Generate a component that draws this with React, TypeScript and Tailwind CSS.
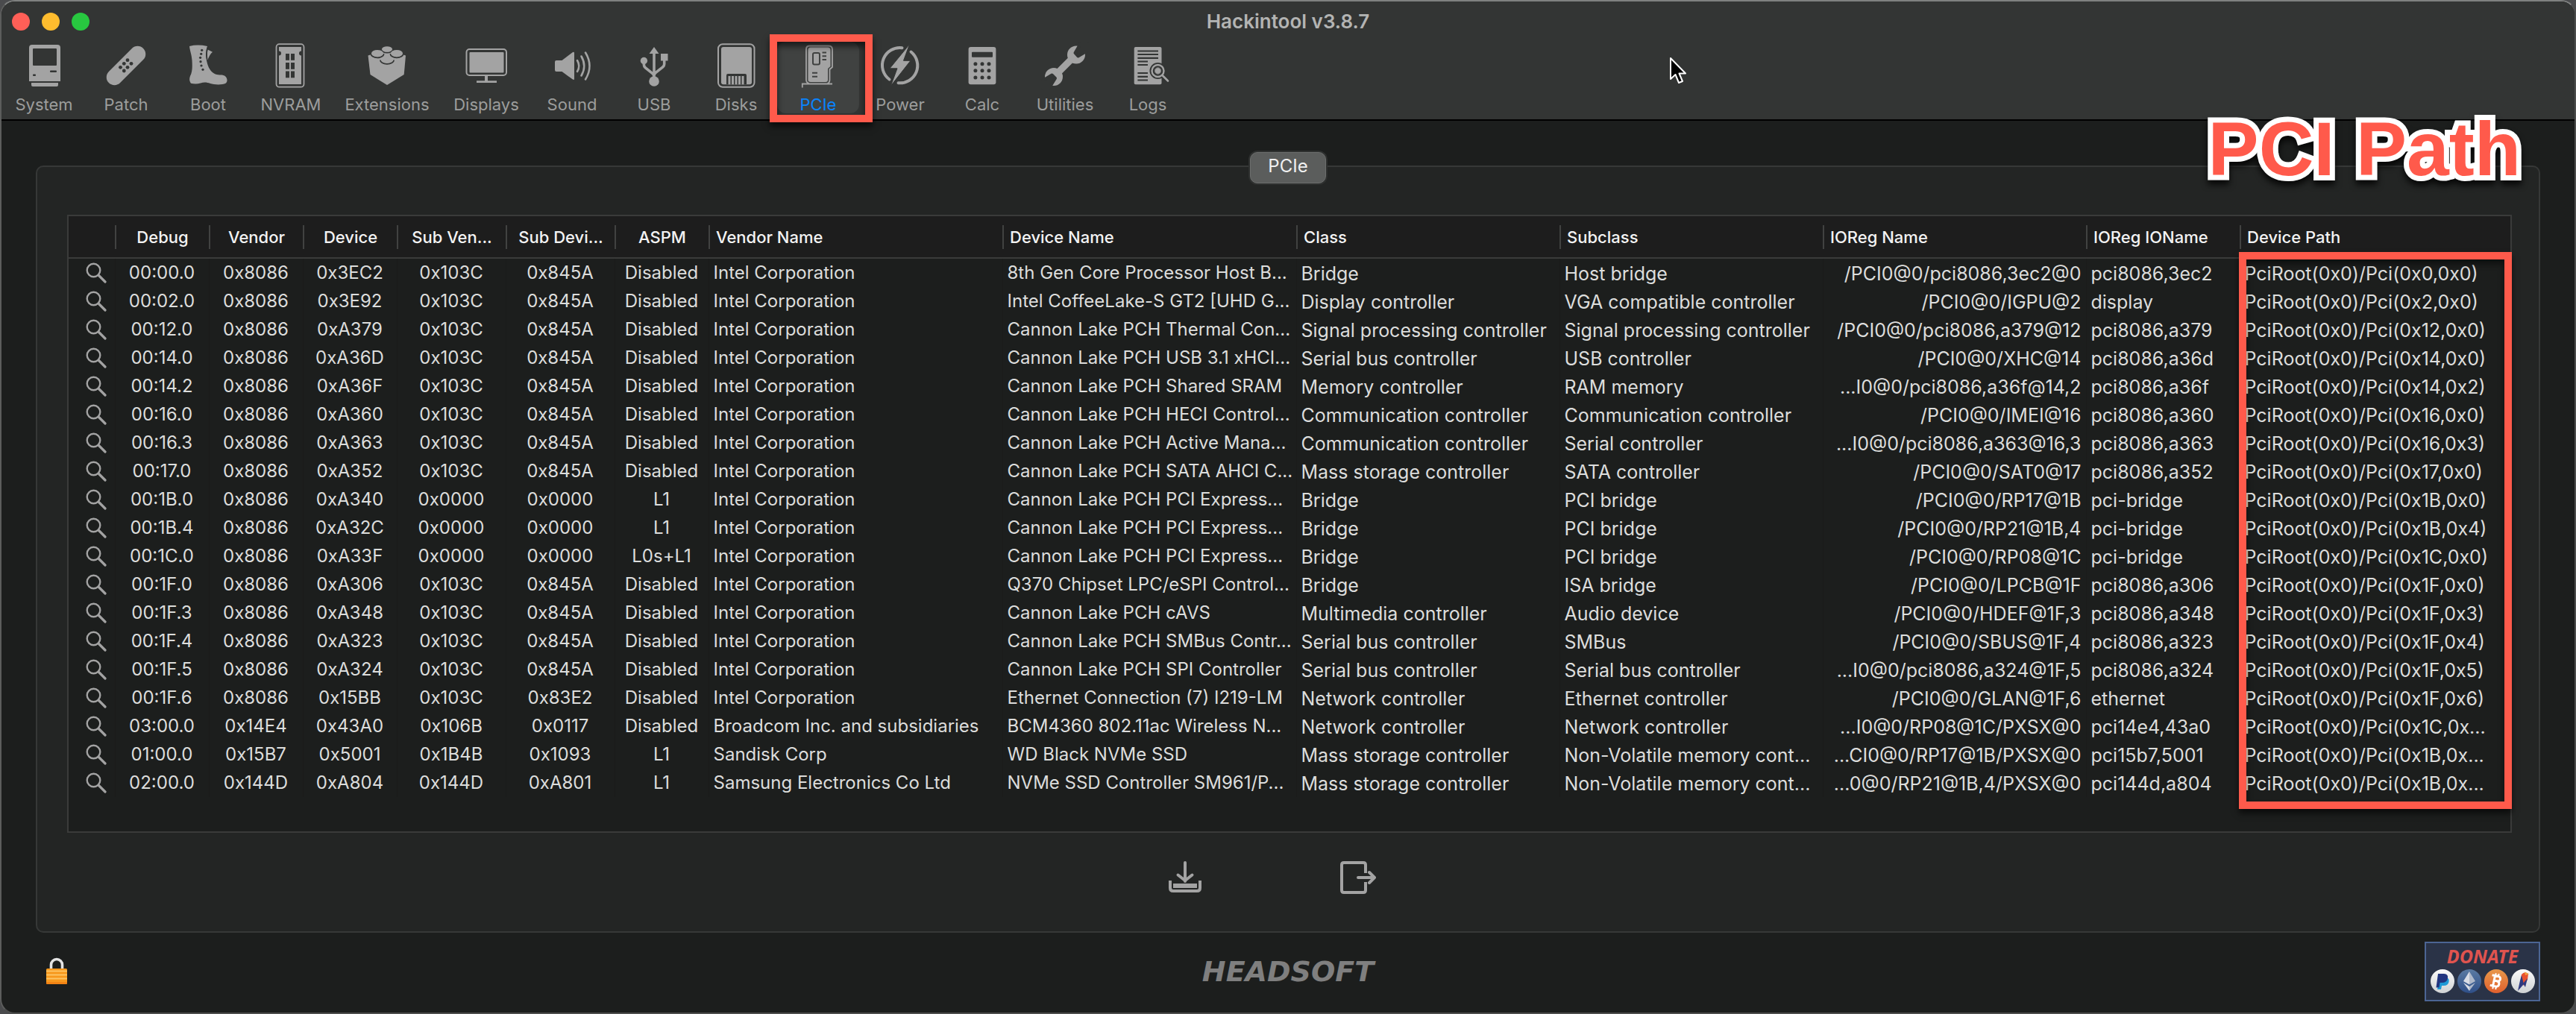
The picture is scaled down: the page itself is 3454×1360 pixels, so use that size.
import type { ReactNode } from "react";

const G = "#a3a3a3";
const BG = "#333534";

const toolIcons: Record<string, ReactNode> = {
  System: (
    <>
      <path d="M12 53V8a4 4 0 0 1 4-4h34a4 4 0 0 1 4 4v45z" fill={G} />
      <rect x="17" y="9" width="32" height="23" rx="1" fill={BG} />
      <rect x="40" y="38.5" width="9" height="2.5" rx="1" fill={BG} />
      <rect x="17" y="43.5" width="4" height="2.5" rx="1" fill={BG} />
      <path d="M15 55h36v3a2 2 0 0 1-2 2H17a2 2 0 0 1-2-2z" fill={G} />
    </>
  ),
  Patch: (
    <>
      <path d="M16.500 47.500L47.500 16.500" stroke={G} strokeWidth="21.500" strokeLinecap="round" />
      {[[34, 24.7], [29.3, 29.3], [39, 29.3], [24.5, 34.3], [34, 34.3], [29.3, 39]].map(([x, y]) => (
        <circle key={`${x}-${y}`} cx={x} cy={y} r="2.400" fill={BG} />
      ))}
    </>
  ),
  Boot: (
    <>
      <path d="M7 6Q18 3.200 31 6Q28 14 29.500 22C31 32 34 39 40 42.500C45 45.500 50 43.500 54 45.500C58 48 58.500 53 56 55.500C50 58.500 40 57.500 35 56C30 54 26 54 22 55.500C17 56.800 13 56.500 9 55.700C7 53 6.500 50 8 46C11 40 11 34 10.500 25C10 17 7.500 12 7 6z" fill={G} />
      <path d="M31.500 10.500L38 13.700C35 16 33 20 31 25.500C30 20 30.500 15 31.500 10.500z" fill={G} />
      <path d="M32 6C29 13 30 20 31 26" stroke={BG} strokeWidth="1.500" fill="none" />
      {[[23.7, 11.3], [22.7, 16.3], [21.6, 21.3], [22, 26.7], [23, 32], [25, 37.3]].map(([x, y]) => (
        <circle key={y} cx={x} cy={y} r="1.600" fill={BG} />
      ))}
    </>
  ),
  NVRAM: (
    <>
      <rect x="12.500" y="3.200" width="37" height="57.500" rx="4" stroke={G} strokeWidth="1.800" fill="none" />
      <path d="M16 7h30v5.500a3 3 0 0 0 0 6V57H16V18.500a3 3 0 0 0 0-6z" fill={G} />
      {[16, 28, 39.5].map((y) => (
        <g key={y} fill={BG}>
          <rect x="25" y={y} width="5" height="8.800" />
          <rect x="32" y={y} width="5" height="8.800" />
        </g>
      ))}
    </>
  ),
  Extensions: (
    <>
      <path d="M6.500 18.500L32 10l25 8.500L54.700 44L32 58L9.500 44z" fill={G} />
      {[[32, 9.8, 7, 3.6], [19, 15.5, 8, 4.6], [45, 15.5, 8, 4.6], [32, 24, 8.500, 4.600]].map(([x, y, rx, ry]) => (
        <g key={`${x}-${y}`}>
          <path d={`M${x - rx - 0.6} ${y + 0.5}A${rx + 0.6} ${ry + 0.8} 0 0 0 ${x + rx + 0.6} ${y + 0.5}`} fill={G} stroke={BG} strokeWidth="1.800" />
          <ellipse cx={x} cy={y} rx={rx} ry={ry} fill={G} />
        </g>
      ))}
    </>
  ),
  Displays: (
    <>
      <rect x="5.500" y="10" width="53.500" height="35" rx="4" stroke={G} strokeWidth="2" fill="none" />
      <rect x="9.500" y="14" width="46" height="27.500" rx="1" fill={G} />
      <path d="M30 46h4v6.300h12V55H19v-2.700h11z" fill={G} />
    </>
  ),
  Sound: (
    <>
      <path d="M9 27a2 2 0 0 1 2-2h7.500L33 14q2-.8 2 1v35q0 1.500-2 .6L18.500 40H11a2 2 0 0 1-2-2z" fill={G} />
      <path d="M39 25q4.500 7.500 0 15M44.500 19.500q7.500 13 0 26M50 14.500q11 18 0 36" stroke={G} strokeWidth="2.600" strokeLinecap="round" fill="none" />
    </>
  ),
  USB: (
    <>
      <path d="M32 7l6.500 9h-13z" fill={G} />
      <path d="M32 14V50M18.400 28v3q0 2 2 4L30 42.500q2 2 2 4M45.700 24v6q0 2-2 4L34 41.500q-2 2-2 4" stroke={G} strokeWidth="3.600" fill="none" />
      <circle cx="32" cy="53" r="6.800" fill={G} />
      <circle cx="18.400" cy="25.500" r="4.700" fill={G} />
      <rect x="41" y="16" width="9.500" height="9.500" fill={G} />
    </>
  ),
  Disks: (
    <>
      <rect x="8" y="3.200" width="48.500" height="57.500" rx="6" stroke={G} strokeWidth="2" fill="none" />
      <rect x="12" y="7" width="41" height="50.300" rx="3" fill={G} />
      <path d="M19 57V45q0-2 2-2h23q2 0 2 2v12z" fill={BG} />
      {[21.5, 26, 30.5, 35, 39.5].map((x) => (
        <rect key={x} x={x} y="46" width="3" height="11.300" fill={G} />
      ))}
    </>
  ),
  PCIe: (
    <>
      <path d="M10.800 61.500v-5H51M20 56q-4-1-4-5V10q0-4.500 4.500-4.500H46q5 0 5 5V34l-3.500 3v14q0 4-3 5" stroke={G} strokeWidth="1.800" fill="none" />
      <path d="M18.500 11q0-3.500 3.500-3.500h23q3.500 0 3.500 3.500v22l-3.500 3v15q0 3-3 3H22q-3.500 0-3.500-3z" fill={G} />
      <rect x="25" y="15" width="9" height="15.500" rx="2" stroke="#404241" strokeWidth="2" fill={G} />
      <path d="M37.500 14.500h5.500M37.500 19.300h5.500M37.500 24h5.500M24 41.800h7M24 46.700h7" stroke="#404241" strokeWidth="2" />
    </>
  ),
  Power: (
    <>
      <path d="M34.500 8.300A23.500 23.500 0 0 0 17.500 50.500M46.500 13.500A23.500 23.500 0 0 1 29.500 55.200" stroke={G} strokeWidth="4" strokeLinecap="round" fill="none" />
      <path d="M44.600 3.300L36.500 25.300H46L19.300 59.300L28 35.800H18z" fill={G} stroke={BG} strokeWidth="1" />
    </>
  ),
  Calc: (
    <>
      <rect x="13.600" y="7" width="36.800" height="50.300" rx="3" fill={G} />
      <rect x="18" y="13.700" width="28" height="7" rx="1" fill={BG} />
      {[29.7, 38.7, 48].map((y) => [22.9, 32, 41].map((x) => <circle key={`${x}-${y}`} cx={x} cy={y} r="2.500" fill={BG} />))}
    </>
  ),
  Utilities: (
    <>
      <path d="M20 44L44 20" stroke={G} strokeWidth="9" />
      <circle cx="47" cy="17.500" r="12" fill={G} />
      <circle cx="17" cy="47" r="12" fill={G} />
      <path d="M49.500 19.500L45.500 15L53 2L62 2L62 12zM14.500 44.500L19 49L11 62L2 62L2 52z" fill={BG} stroke={BG} strokeWidth="4" strokeLinejoin="round" />
    </>
  ),
  Logs: (
    <>
      <rect x="13.700" y="7" width="36.800" height="50.300" rx="2" fill={G} />
      <path d="M18.400 12.500H46M18.400 17H46M18.400 21.800H46M18.400 26.500H32M18.400 31H32M18.400 42H32M18.400 46.800H32M18.400 51.500H32" stroke={BG} strokeWidth="2.200" />
      <circle cx="45.500" cy="39" r="11" fill={BG} />
      <path d="M51 45l8 8" stroke={BG} strokeWidth="5" />
      <circle cx="45.500" cy="39" r="8" stroke={G} strokeWidth="2.400" fill="none" />
      <circle cx="45.500" cy="39" r="4.200" fill={G} stroke="#7b7b7b" />
      <path d="M51.500 45l7.500 7.500" stroke={G} strokeWidth="2.600" strokeLinecap="round" />
    </>
  ),
};

const tools = [
  ["System", "w-[110px]"], ["Patch", "w-[110px]"], ["Boot", "w-[110px]"], ["NVRAM", "w-[112px]"],
  ["Extensions", "w-[146px]"], ["Displays", "w-[120px]"], ["Sound", "w-[110px]"], ["USB", "w-[110px]"],
  ["Disks", "w-[110px]"], ["PCIe", "w-[110px]"], ["Power", "w-[110px]"], ["Calc", "w-[110px]"],
  ["Utilities", "w-[112px]"], ["Logs", "w-[110px]"],
];

const columns = [
  ["", "w-[62px]"], ["Debug", "w-[126px]"], ["Vendor", "w-[126px]"], ["Device", "w-[126px]"],
  ["Sub Ven...", "w-[146px]"], ["Sub Devi...", "w-[146px]"], ["ASPM", "w-[126px]"],
  ["Vendor Name", "w-[394px]"], ["Device Name", "w-[394px]"], ["Class", "w-[353px]"],
  ["Subclass", "w-[353px]"], ["IOReg Name", "w-[353px]"], ["IOReg IOName", "w-[206px]"], ["Device Path", ""],
];

const I = "Intel Corporation";
const rows = [
  ["00:00.0", "0x8086", "0x3EC2", "0x103C", "0x845A", "Disabled", I, "8th Gen Core Processor Host B...", "Bridge", "Host bridge", "/PCI0@0/pci8086,3ec2@0", "pci8086,3ec2", "PciRoot(0x0)/Pci(0x0,0x0)"],
  ["00:02.0", "0x8086", "0x3E92", "0x103C", "0x845A", "Disabled", I, "Intel CoffeeLake-S GT2 [UHD G...", "Display controller", "VGA compatible controller", "/PCI0@0/IGPU@2", "display", "PciRoot(0x0)/Pci(0x2,0x0)"],
  ["00:12.0", "0x8086", "0xA379", "0x103C", "0x845A", "Disabled", I, "Cannon Lake PCH Thermal Con...", "Signal processing controller", "Signal processing controller", "/PCI0@0/pci8086,a379@12", "pci8086,a379", "PciRoot(0x0)/Pci(0x12,0x0)"],
  ["00:14.0", "0x8086", "0xA36D", "0x103C", "0x845A", "Disabled", I, "Cannon Lake PCH USB 3.1 xHCI...", "Serial bus controller", "USB controller", "/PCI0@0/XHC@14", "pci8086,a36d", "PciRoot(0x0)/Pci(0x14,0x0)"],
  ["00:14.2", "0x8086", "0xA36F", "0x103C", "0x845A", "Disabled", I, "Cannon Lake PCH Shared SRAM", "Memory controller", "RAM memory", "...I0@0/pci8086,a36f@14,2", "pci8086,a36f", "PciRoot(0x0)/Pci(0x14,0x2)"],
  ["00:16.0", "0x8086", "0xA360", "0x103C", "0x845A", "Disabled", I, "Cannon Lake PCH HECI Control...", "Communication controller", "Communication controller", "/PCI0@0/IMEI@16", "pci8086,a360", "PciRoot(0x0)/Pci(0x16,0x0)"],
  ["00:16.3", "0x8086", "0xA363", "0x103C", "0x845A", "Disabled", I, "Cannon Lake PCH Active Mana...", "Communication controller", "Serial controller", "...I0@0/pci8086,a363@16,3", "pci8086,a363", "PciRoot(0x0)/Pci(0x16,0x3)"],
  ["00:17.0", "0x8086", "0xA352", "0x103C", "0x845A", "Disabled", I, "Cannon Lake PCH SATA AHCI C...", "Mass storage controller", "SATA controller", "/PCI0@0/SAT0@17", "pci8086,a352", "PciRoot(0x0)/Pci(0x17,0x0)"],
  ["00:1B.0", "0x8086", "0xA340", "0x0000", "0x0000", "L1", I, "Cannon Lake PCH PCI Express...", "Bridge", "PCI bridge", "/PCI0@0/RP17@1B", "pci-bridge", "PciRoot(0x0)/Pci(0x1B,0x0)"],
  ["00:1B.4", "0x8086", "0xA32C", "0x0000", "0x0000", "L1", I, "Cannon Lake PCH PCI Express...", "Bridge", "PCI bridge", "/PCI0@0/RP21@1B,4", "pci-bridge", "PciRoot(0x0)/Pci(0x1B,0x4)"],
  ["00:1C.0", "0x8086", "0xA33F", "0x0000", "0x0000", "L0s+L1", I, "Cannon Lake PCH PCI Express...", "Bridge", "PCI bridge", "/PCI0@0/RP08@1C", "pci-bridge", "PciRoot(0x0)/Pci(0x1C,0x0)"],
  ["00:1F.0", "0x8086", "0xA306", "0x103C", "0x845A", "Disabled", I, "Q370 Chipset LPC/eSPI Control...", "Bridge", "ISA bridge", "/PCI0@0/LPCB@1F", "pci8086,a306", "PciRoot(0x0)/Pci(0x1F,0x0)"],
  ["00:1F.3", "0x8086", "0xA348", "0x103C", "0x845A", "Disabled", I, "Cannon Lake PCH cAVS", "Multimedia controller", "Audio device", "/PCI0@0/HDEF@1F,3", "pci8086,a348", "PciRoot(0x0)/Pci(0x1F,0x3)"],
  ["00:1F.4", "0x8086", "0xA323", "0x103C", "0x845A", "Disabled", I, "Cannon Lake PCH SMBus Contr...", "Serial bus controller", "SMBus", "/PCI0@0/SBUS@1F,4", "pci8086,a323", "PciRoot(0x0)/Pci(0x1F,0x4)"],
  ["00:1F.5", "0x8086", "0xA324", "0x103C", "0x845A", "Disabled", I, "Cannon Lake PCH SPI Controller", "Serial bus controller", "Serial bus controller", "...I0@0/pci8086,a324@1F,5", "pci8086,a324", "PciRoot(0x0)/Pci(0x1F,0x5)"],
  ["00:1F.6", "0x8086", "0x15BB", "0x103C", "0x83E2", "Disabled", I, "Ethernet Connection (7) I219-LM", "Network controller", "Ethernet controller", "/PCI0@0/GLAN@1F,6", "ethernet", "PciRoot(0x0)/Pci(0x1F,0x6)"],
  ["03:00.0", "0x14E4", "0x43A0", "0x106B", "0x0117", "Disabled", "Broadcom Inc. and subsidiaries", "BCM4360 802.11ac Wireless N...", "Network controller", "Network controller", "...I0@0/RP08@1C/PXSX@0", "pci14e4,43a0", "PciRoot(0x0)/Pci(0x1C,0x..."],
  ["01:00.0", "0x15B7", "0x5001", "0x1B4B", "0x1093", "L1", "Sandisk Corp", "WD Black NVMe SSD", "Mass storage controller", "Non-Volatile memory cont...", "...CI0@0/RP17@1B/PXSX@0", "pci15b7,5001", "PciRoot(0x0)/Pci(0x1B,0x..."],
  ["02:00.0", "0x144D", "0xA804", "0x144D", "0xA801", "L1", "Samsung Electronics Co Ltd", "NVMe SSD Controller SM961/P...", "Mass storage controller", "Non-Volatile memory cont...", "...0@0/RP21@1B,4/PXSX@0", "pci144d,a804", "PciRoot(0x0)/Pci(0x1B,0x..."],
];

function cellClass(i: number) {
  if (i < 6) return "text-center text-2xl leading-[38px]";
  if (i < 8) return "pl-[6px] text-2xl leading-[38px]";
  if (i === 10) return "pr-[6px] pt-[2px] text-right text-[25px] leading-[36px]";
  return "pl-[6px] pt-[2px] text-[25px] leading-[36px]";
}

function Titlebar() {
  return (
    <header className="relative border-b-2 border-black bg-[#333534]">
      <div className="grid h-[54px] grid-cols-3 items-center px-[14px]">
        <div className="flex gap-4">
          <button aria-label="Close" className="size-6 rounded-full bg-[#ff5f57]" />
          <button aria-label="Minimize" className="size-6 rounded-full bg-[#febc2e]" />
          <button aria-label="Zoom" className="size-6 rounded-full bg-[#28c840]" />
        </div>
        <h1 className="text-center text-[26px] leading-8 font-semibold text-[#b3b4b3]">Hackintool v3.8.7</h1>
      </div>
      <nav aria-label="Sections" className="flex pb-2 pl-[2px]">
        {tools.map(([name, width]) => (
          <button
            key={name}
            className={`${width} relative flex flex-col items-center gap-2 rounded-xl ${name === "PCIe" ? "bg-[#404241] text-[#0a84ff]" : "text-[#9c9d9c]"}`}
          >
            <svg viewBox="0 0 64 64" className="size-16" fill="none" aria-hidden="true">{toolIcons[name]}</svg>
            <span className="text-[22px] leading-6">{name}</span>
            {name === "PCIe" && (
              <span className="absolute -top-[10px] -left-[10px] h-[118px] w-[138px] border-10 border-[#ff5a4b] shadow-[0_6px_8px_rgba(0,0,0,0.6),inset_0_6px_8px_rgba(0,0,0,0.6)]" />
            )}
          </button>
        ))}
      </nav>
      <svg viewBox="0 0 24 38" className="absolute top-[74px] left-[2236px] h-[38px] w-6" aria-hidden="true">
        <path d="M2 2v28l6.500-6l4.500 11l5-2l-4.500-10.500H22z" fill="#000" stroke="#fff" strokeWidth="2" strokeLinejoin="round" />
      </svg>
    </header>
  );
}

function DeviceTable() {
  return (
    <div className="relative border-2 border-[#3a3b3a] bg-[#1c1e1d] pb-[46px]">
      <table className="w-full table-fixed border-collapse">
        <thead>
          <tr className="h-[56px] border-b-2 border-[#3a3b3a] bg-[#1d1d1d]">
            {columns.map(([name, width], i) => (
              <th key={i} scope="col" aria-label={name || "Inspect"} className={`${width} p-0 text-[22px] font-medium text-[#f3f3f3]`}>
                <div className={`h-8 overflow-hidden leading-8 whitespace-nowrap ${i > 0 ? "border-l-2 border-[#414241]" : ""} ${i > 6 ? "pl-2 text-left" : "text-center"}`}>
                  {name}
                </div>
              </th>
            ))}
          </tr>
        </thead>
        <tbody>
          {rows.map((row) => (
            <tr key={row[0]} className="h-[38px]">
              <td className="p-0">
                <button aria-label={`Inspect ${row[0]}`} className="flex h-[38px] w-full items-center justify-center pl-3">
                  <svg viewBox="0 0 28 28" className="size-7" fill="none" stroke="#a3a3a3" aria-hidden="true">
                    <circle cx="10.500" cy="10.500" r="8.800" strokeWidth="2.400" />
                    <path d="M17.500 17.500l8.500 8.500" strokeWidth="3.200" strokeLinecap="round" />
                  </svg>
                </button>
              </td>
              {row.map((text, i) => (
                <td key={i} className={`overflow-hidden border-l border-[#1a1b1a] py-0 whitespace-nowrap text-[#dcdddc] ${cellClass(i)}`}>
                  {text}
                </td>
              ))}
            </tr>
          ))}
        </tbody>
      </table>
      <div className="pointer-events-none absolute top-[48px] -right-[2px] bottom-[30px] w-[366px] border-10 border-[#ff5a4b] shadow-[0_6px_8px_rgba(0,0,0,0.6),inset_0_6px_8px_rgba(0,0,0,0.5)]" />
    </div>
  );
}

function Coins() {
  return (
    <svg viewBox="0 0 142 34" className="h-[34px] w-[142px]" aria-hidden="true">
      <defs>
        <linearGradient id="silver" x2="0" y2="1"><stop stopColor="#fafafa" /><stop offset="1" stopColor="#cfd2d4" /></linearGradient>
        <linearGradient id="blue" x2="0" y2="1"><stop stopColor="#5b7ba3" /><stop offset="1" stopColor="#2f4f88" /></linearGradient>
        <linearGradient id="orange" x2="0" y2="1"><stop stopColor="#e8984a" /><stop offset="1" stopColor="#e0602e" /></linearGradient>
      </defs>
      <circle cx="17" cy="17" r="16" fill="url(#silver)" />
      <path d="M14 12h8q4.500 1 3.500 6q-1 5-7 5h-2.500l-1 5h-5z" fill="#1f9ad6" />
      <path d="M11 7h8q6 .5 5 6q-1 6-8 6h-2.500l-1 6.500H8.500z" fill="#22357f" />
      <circle cx="53" cy="17" r="16" fill="url(#blue)" />
      <path d="M53 4l-8 13l8 4.500zM53 24l-8-5l8 11z" fill="#d9dde6" />
      <path d="M53 4l8 13l-8 4.500zM53 24l8-5l-8 11z" fill="#aeb8c9" />
      <circle cx="89" cy="17" r="16" fill="url(#orange)" />
      <g transform="rotate(12 89 17)" fill="none" stroke="#fff">
        <path d="M82 10h8.500a3.300 3.300 0 0 1 0 6.700H86M90.500 16.700a3.700 3.700 0 0 1 0 7.300H82M86 10v14" strokeWidth="3" />
        <path d="M86.500 6.500v3M90.500 6.500v3M86.500 24v4M90.500 24v4" strokeWidth="2" />
      </g>
      <circle cx="125" cy="17" r="16" fill="url(#silver)" />
      <path d="M123 8q4-5 9-1l-1 8l-5 8l-4-6z" fill="#e9512f" />
      <path d="M127 4.500l6 3l-5 1.500z" fill="#f2a03c" />
      <path d="M123 9l3 12l-8 9l3-14z" fill="#2f3a80" />
      <path d="M131 13l-3 12l-3-5z" fill="#2f3a80" />
    </svg>
  );
}

export default function App() {
  return (
    <div className="flex min-h-screen bg-[#4a4b4d] font-[Inter,sans-serif]">
      <div className="relative flex w-full flex-col overflow-hidden rounded-[20px] border-2 border-t-[#7f8180] border-r-[#4c4d4c] border-b-[#4c4d4c] border-l-[#5c5d5c] bg-[#1c1e1d]">
        <Titlebar />
        <main className="flex grow flex-col pt-[60px]">
          <section className="relative mx-[46px] rounded-[10px] border-2 border-[#363837] bg-[#232524] pt-16 pr-9 pb-[48px] pl-10">
            <div className="absolute inset-x-0 -top-5 flex justify-center">
              <button className="h-[42px] w-[102px] rounded-[10px] border border-[#6c6e6d] bg-[#5b5d5c] pb-1 text-2xl text-[#f0f0f0] shadow-[0_0_0_2px_#2e302f]">PCIe</button>
            </div>
            <DeviceTable />
            <div className="mt-9 flex items-center justify-center gap-[184px] pr-12">
              <button aria-label="Download" className="size-12">
                <svg viewBox="0 0 48 48" fill="none" stroke="#a3a3a3" strokeWidth="4" aria-hidden="true">
                  <path d="M24 4v25M14.500 20.500L24 28l9.500-7.500" strokeLinecap="round" strokeLinejoin="round" />
                  <path d="M4 28v10q0 4 4 4h32q4 0 4-4V28" />
                  <path d="M8 35h32" strokeWidth="6" />
                </svg>
              </button>
              <button aria-label="Export" className="size-12">
                <svg viewBox="0 0 48 48" fill="none" stroke="#a3a3a3" strokeWidth="4" aria-hidden="true">
                  <path d="M34 18V7q0-3-3-3H5Q2 4 2 7v34q0 3 3 3h26q3 0 3-3V30" />
                  <path d="M24 24h22M39 17l7 7l-7 7" strokeLinecap="round" strokeLinejoin="round" />
                </svg>
              </button>
            </div>
          </section>
          <footer className="grid grow grid-cols-3 items-center px-[46px] pb-1">
            <button aria-label="Unlock" className="ml-3 w-8">
              <svg viewBox="0 0 32 38" className="h-[38px] w-8" aria-hidden="true">
                <path d="M8.500 18v-8a7.500 7.500 0 0 1 15 0v8" fill="none" stroke="#e4e4e4" strokeWidth="3.600" />
                <rect x="2" y="15" width="28" height="21" rx="1.500" fill="#f7981d" />
                <path d="M2 18.500h28M2 23.500h28M2 28.500h28" stroke="#fdc463" strokeWidth="2" />
                <path d="M2 34.500h28" stroke="#f07a12" strokeWidth="2" />
              </svg>
            </button>
            <p className="text-center font-['DejaVu_Sans',sans-serif] text-[38px] leading-10 font-bold text-[#7f7f7f] italic">HEADSOFT</p>
            <a href="#donate" className="flex h-20 w-[155px] flex-col items-center justify-self-end border-2 border-[#4c6593] bg-[#2a3347] pt-1">
              <span className="font-['Noto_Sans',sans-serif] text-[25px] leading-[26px] font-bold text-[#e0544f] italic">DONATE</span>
              <span className="mt-1"><Coins /></span>
            </a>
          </footer>
        </main>
        <div className="absolute top-[140px] right-[72px] font-['Liberation_Sans',sans-serif] text-[102px] leading-[116px] font-bold whitespace-nowrap text-[#ff5a4b] drop-shadow-[0_6px_4px_rgba(0,0,0,0.8)] [paint-order:stroke_fill] [-webkit-text-stroke:14px_#fff]">PCI Path</div>
      </div>
    </div>
  );
}
